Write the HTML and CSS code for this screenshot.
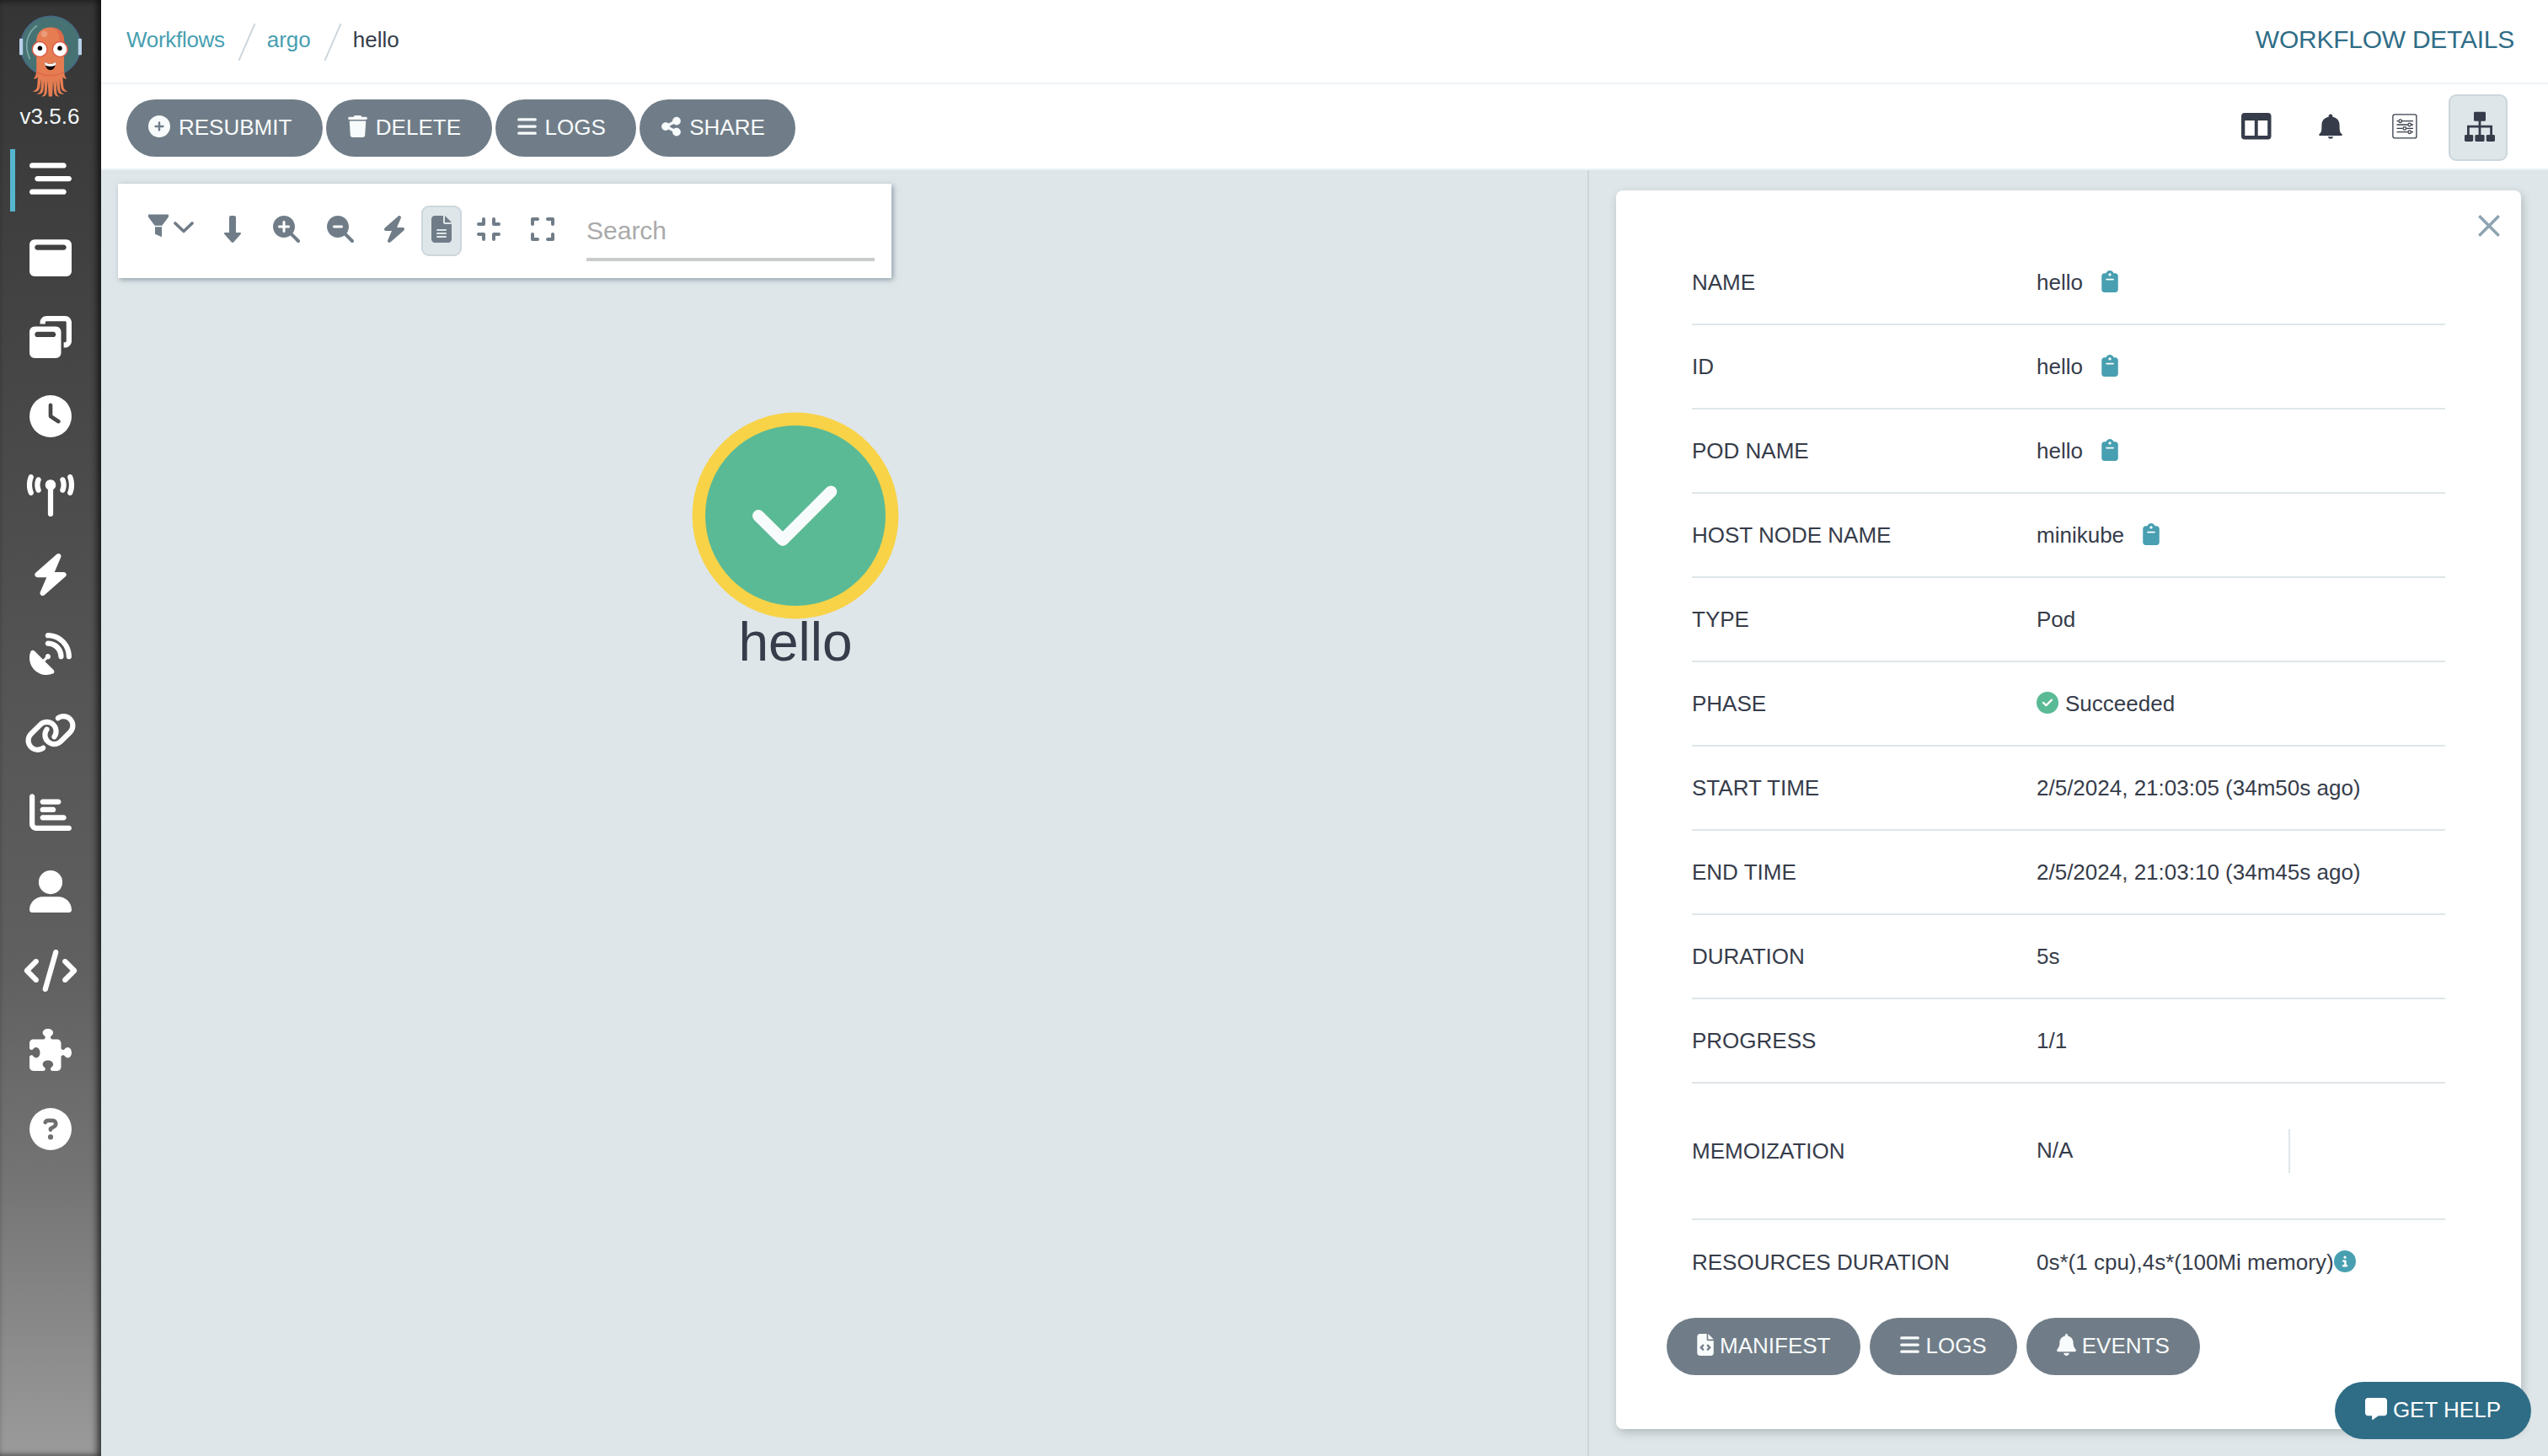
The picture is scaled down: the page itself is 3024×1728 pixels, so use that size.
FILE: index.html
```html
<!DOCTYPE html>
<html lang="en">
<head>
<meta charset="utf-8">
<title>Workflow Details - hello</title>
<link rel="stylesheet" href="styles.css">
</head>
<body>
<svg class="sprite" aria-hidden="true">
  <symbol id="i-workflows" viewBox="0 0 512 512"><path d="M0 96C0 78.3 14.3 64 32 64H416c17.7 0 32 14.3 32 32s-14.3 32-32 32H32C14.3 128 0 113.7 0 96zM64 256c0-17.7 14.3-32 32-32H480c17.7 0 32 14.3 32 32s-14.3 32-32 32H96c-17.7 0-32-14.3-32-32zM448 416c0 17.7-14.3 32-32 32H32c-17.7 0-32-14.3-32-32s14.3-32 32-32H416c17.7 0 32 14.3 32 32z"/></symbol>
  <symbol id="i-template" viewBox="0 0 512 512"><path d="M64 32C28.7 32 0 60.7 0 96V416c0 35.3 28.7 64 64 64H448c35.3 0 64-28.7 64-64V96c0-35.3-28.7-64-64-64H64zM96 96H416c17.7 0 32 14.3 32 32s-14.3 32-32 32H96c-17.7 0-32-14.3-32-32s14.3-32 32-32z"/></symbol>
  <symbol id="i-cluster" viewBox="0 0 512 512"><path d="M432 64H208c-8.8 0-16 7.2-16 16V96H128V80c0-44.2 35.8-80 80-80H432c44.2 0 80 35.8 80 80V304c0 44.2-35.8 80-80 80H416V320h16c8.8 0 16-7.2 16-16V80c0-8.8-7.2-16-16-16zM0 192c0-35.3 28.7-64 64-64H320c35.3 0 64 28.7 64 64V448c0 35.3-28.7 64-64 64H64c-35.3 0-64-28.7-64-64V192zm64 32c0 17.7 14.3 32 32 32H288c17.7 0 32-14.3 32-32s-14.3-32-32-32H96c-17.7 0-32 14.3-32 32z"/></symbol>
  <symbol id="i-clock" viewBox="0 0 512 512"><path d="M256 0a256 256 0 1 1 0 512A256 256 0 1 1 256 0zM232 120V256c0 8 4 15.5 10.7 20l96 64c11 7.4 25.9 4.4 33.3-6.7s4.4-25.9-6.7-33.3L280 243.2V120c0-13.3-10.7-24-24-24s-24 10.7-24 24z"/></symbol>
  <symbol id="i-tower" viewBox="0 0 576 512"><path d="M80.3 44C69.8 69.9 64 98.2 64 128s5.8 58.1 16.3 84c6.6 16.4-1.3 35-17.7 41.7s-35-1.3-41.7-17.7C7.4 202.6 0 166.1 0 128S7.4 53.4 20.9 20C27.6 3.6 46.2-4.3 62.6 2.3S86.9 27.6 80.3 44zM555.1 20C568.6 53.4 576 89.9 576 128s-7.4 74.6-20.9 108c-6.6 16.4-25.3 24.3-41.7 17.7S489.1 228.4 495.7 212c10.5-25.9 16.3-54.2 16.3-84s-5.8-58.1-16.3-84C489.1 27.6 497 9 513.4 2.3s35 1.3 41.7 17.7zM352 128c0 23.7-12.9 44.4-32 55.4V480c0 17.7-14.3 32-32 32s-32-14.3-32-32V183.4c-19.1-11.1-32-31.7-32-55.4c0-35.3 28.7-64 64-64s64 28.7 64 64zM170.6 76.8C163.8 92.4 160 109.7 160 128s3.8 35.6 10.6 51.2c7.1 16.2-.3 35.1-16.5 42.1s-35.1-.3-42.1-16.5c-10.3-23.6-16-49.6-16-76.8s5.7-53.2 16-76.8c7.1-16.2 25.9-23.6 42.1-16.5s23.6 25.9 16.5 42.1zM464 51.2c10.3 23.6 16 49.6 16 76.8s-5.7 53.2-16 76.8c-7.1 16.2-25.9 23.6-42.1 16.5s-23.6-25.9-16.5-42.1c6.8-15.6 10.6-32.9 10.6-51.2s-3.8-35.6-10.6-51.2c-7.1-16.2 .3-35.1 16.5-42.1s35.1 .3 42.1 16.5z"/></symbol>
  <symbol id="i-bolt" viewBox="0 0 448 512"><path d="M349.4 44.6c5.9-13.7 1.5-29.7-10.6-38.5s-28.6-8-39.9 1.8l-256 224c-10 8.8-13.6 22.9-8.9 35.3S50.7 288 64 288H175.5L98.6 467.4c-5.9 13.7-1.5 29.7 10.6 38.5s28.6 8 39.9-1.8l256-224c10-8.8 13.6-22.9 8.9-35.3s-16.6-20.7-30-20.7H272.5L349.4 44.6z"/></symbol>
  <symbol id="i-dish" viewBox="0 0 512 512"><path d="M192 32c0-17.7 14.3-32 32-32C383.1 0 512 128.9 512 288c0 17.7-14.3 32-32 32s-32-14.3-32-32C448 164.3 347.7 64 224 64c-17.7 0-32-14.3-32-32zM60.6 220.6L164.7 324.7l28.4-28.4c-.7-2.6-1.1-5.4-1.1-8.3c0-17.7 14.3-32 32-32s32 14.3 32 32s-14.3 32-32 32c-2.9 0-5.6-.4-8.3-1.1l-28.4 28.4L291.4 451.4c14.5 14.5 11.8 38.8-7.3 46.3C260.5 506.9 234.9 512 208 512C93.1 512 0 418.9 0 304c0-26.9 5.1-52.5 14.4-76.1c7.5-19 31.8-21.8 46.3-7.3zM224 96c106 0 192 86 192 192c0 17.7-14.3 32-32 32s-32-14.3-32-32c0-70.7-57.3-128-128-128c-17.7 0-32-14.3-32-32s14.3-32 32-32z"/></symbol>
  <symbol id="i-link" viewBox="0 0 640 512"><path d="M579.8 267.7c56.5-56.5 56.5-148 0-204.5c-50-50-128.8-56.5-186.3-15.4l-1.6 1.1c-14.4 10.3-17.7 30.3-7.4 44.6s30.3 17.7 44.6 7.4l1.6-1.1c32.1-22.9 76-19.3 103.8 8.6c31.5 31.5 31.5 82.5 0 114L422.3 334.8c-31.5 31.5-82.5 31.5-114 0c-27.9-27.9-31.5-71.8-8.6-103.8l1.1-1.6c10.3-14.4 6.9-34.4-7.4-44.6s-34.4-6.9-44.6 7.4l-1.1 1.6C206.5 251.2 213 330 263 380c56.5 56.5 148 56.5 204.5 0L579.8 267.7zM60.2 244.3c-56.5 56.5-56.5 148 0 204.5c50 50 128.8 56.5 186.3 15.4l1.6-1.1c14.4-10.3 17.7-30.3 7.4-44.6s-30.3-17.7-44.6-7.4l-1.6 1.1c-32.1 22.9-76 19.3-103.8-8.6C74 372 74 321 105.5 289.5L217.7 177.2c31.5-31.5 82.5-31.5 114 0c27.9 27.9 31.5 71.8 8.6 103.9l-1.1 1.6c-10.3 14.4-6.9 34.4 7.4 44.6s34.4 6.9 44.6-7.4l1.1-1.6C433.5 260.8 427 182 377 132c-56.5-56.5-148-56.5-204.5 0L60.2 244.3z"/></symbol>
  <symbol id="i-chart" viewBox="0 0 512 512"><path d="M32 32c17.7 0 32 14.3 32 32V400c0 8.800 7.200 16 16 16H480c17.700 0 32 14.300 32 32s-14.300 32-32 32H80c-44.200 0-80-35.800-80-80V64C0 46.300 14.300 32 32 32zm96 96c0-17.700 14.300-32 32-32l192 0c17.700 0 32 14.300 32 32s-14.300 32-32 32H160c-17.700 0-32-14.300-32-32zm32 64H288c17.700 0 32 14.300 32 32s-14.300 32-32 32H160c-17.700 0-32-14.300-32-32s14.300-32 32-32zm0 96H416c17.700 0 32 14.300 32 32s-14.300 32-32 32H160c-17.700 0-32-14.300-32-32s14.300-32 32-32z"/></symbol>
  <symbol id="i-user" viewBox="0 0 512 512"><path d="M256 288A144 144 0 1 0 256 0a144 144 0 1 0 0 288zm-94.7 32C72.2 320 0 392.2 0 481.3c0 17 13.8 30.7 30.7 30.7H481.3c17 0 30.7-13.8 30.7-30.7C512 392.2 439.8 320 350.7 320H161.3z"/></symbol>
  <symbol id="i-code" viewBox="0 0 640 512"><path d="M392.8 1.2c-17-4.9-34.7 5-39.6 22l-128 448c-4.9 17 5 34.7 22 39.6s34.7-5 39.6-22l128-448c4.9-17-5-34.7-22-39.6zm80.6 120.1c-12.5 12.5-12.5 32.8 0 45.3L562.7 256l-89.4 89.4c-12.5 12.5-12.5 32.8 0 45.3s32.8 12.5 45.3 0l112-112c12.5-12.5 12.5-32.8 0-45.3l-112-112c-12.5-12.5-32.8-12.5-45.3 0zm-306.7 0c-12.5-12.5-32.8-12.5-45.3 0l-112 112c-12.5 12.5-12.5 32.8 0 45.3l112 112c12.5 12.5 32.8 12.5 45.3 0s12.5-32.8 0-45.3L77.3 256l89.4-89.4c12.5-12.5 12.5-32.8 0-45.3z"/></symbol>
  <symbol id="i-puzzle" viewBox="0 0 512 512"><path d="M192 104.8c0-9.2-5.8-17.3-13.2-22.8C167.2 73.3 160 61.3 160 48c0-26.5 28.7-48 64-48s64 21.5 64 48c0 13.3-7.2 25.3-18.8 34c-7.4 5.5-13.2 13.6-13.2 22.8c0 12.8 10.4 23.2 23.2 23.2H336c26.5 0 48 21.5 48 48v56.8c0 12.8 10.4 23.2 23.2 23.2c9.2 0 17.3-5.8 22.8-13.2c8.7-11.6 20.7-18.8 34-18.8c26.5 0 48 28.7 48 64s-21.5 64-48 64c-13.3 0-25.3-7.2-34-18.8c-5.5-7.4-13.6-13.2-22.8-13.2c-12.8 0-23.2 10.4-23.2 23.2V464c0 26.5-21.5 48-48 48H279.2c-12.8 0-23.2-10.4-23.2-23.2c0-9.2 5.8-17.3 13.2-22.8c11.6-8.7 18.8-20.7 18.8-34c0-26.5-28.7-48-64-48s-64 21.5-64 48c0 13.3 7.2 25.3 18.8 34c7.4 5.5 13.2 13.6 13.2 22.8c0 12.8-10.4 23.2-23.2 23.2H48c-26.5 0-48-21.5-48-48V343.2C0 330.4 10.4 320 23.2 320c9.2 0 17.3 5.8 22.8 13.2C54.7 344.8 66.7 352 80 352c26.5 0 48-28.7 48-64s-21.5-64-48-64c-13.3 0-25.3 7.2-34 18.8C40.5 250.2 32.4 256 23.2 256C10.4 256 0 245.6 0 232.8V176c0-26.5 21.5-48 48-48H168.8c12.8 0 23.2-10.4 23.2-23.2z"/></symbol>
  <symbol id="i-question" viewBox="0 0 512 512"><path d="M256 512A256 256 0 1 0 256 0a256 256 0 1 0 0 512zM169.800 165.300c7.900-22.300 29.100-37.300 52.800-37.300h58.300c34.900 0 63.100 28.300 63.100 63.100c0 22.600-12.100 43.500-31.700 54.800L280 264.400c-.2 13-10.900 23.600-24 23.600c-13.300 0-24-10.700-24-24V250.500c0-8.600 4.600-16.500 12.100-20.800l44.300-25.400c4.700-2.700 7.600-7.700 7.600-13.100c0-8.400-6.800-15.100-15.100-15.100H222.600c-3.400 0-6.400 2.100-7.500 5.300l-.4 1.200c-4.400 12.500-18.200 19-30.600 14.600s-19-18.200-14.600-30.600l.4-1.200zM224 352a32 32 0 1 1 64 0 32 32 0 1 1 -64 0z"/></symbol>
  <symbol id="i-plus" viewBox="0 0 512 512"><path d="M256 512A256 256 0 1 0 256 0a256 256 0 1 0 0 512zM232 344V280H168c-13.300 0-24-10.700-24-24s10.700-24 24-24h64V168c0-13.300 10.700-24 24-24s24 10.700 24 24v64h64c13.300 0 24 10.700 24 24s-10.700 24-24 24H280v64c0 13.300-10.700 24-24 24s-24-10.700-24-24z"/></symbol>
  <symbol id="i-trash" viewBox="0 0 448 512"><path d="M135.2 17.7L128 32H32C14.3 32 0 46.3 0 64S14.3 96 32 96H416c17.7 0 32-14.3 32-32s-14.3-32-32-32H320l-7.2-14.3C307.4 6.8 296.3 0 284.2 0H163.8c-12.1 0-23.2 6.8-28.6 17.7zM416 128H32L53.2 467c1.6 25.3 22.6 45 47.9 45H346.9c25.3 0 46.3-19.7 47.9-45L416 128z"/></symbol>
  <symbol id="i-bars" viewBox="0 0 448 512"><path d="M32 64H416a32 32 0 0 1 0 64H32a32 32 0 0 1 0-64zM32 224H416a32 32 0 0 1 0 64H32a32 32 0 0 1 0-64zM32 384H416a32 32 0 0 1 0 64H32a32 32 0 0 1 0-64z"/></symbol>
  <symbol id="i-share" viewBox="0 0 448 512"><path d="M352 224c53 0 96-43 96-96s-43-96-96-96s-96 43-96 96c0 4 .2 8 .7 11.900l-94.100 47C145.400 170.200 121.900 160 96 160c-53 0-96 43-96 96s43 96 96 96c25.900 0 49.400-10.200 66.600-26.900l94.100 47c-.5 3.900-.7 7.800-.7 11.900c0 53 43 96 96 96s96-43 96-96s-43-96-96-96c-25.900 0-49.400 10.200-66.600 26.900l-94.100-47c.5-3.900 .7-7.800 .7-11.900s-.2-8-.7-11.900l94.100-47C302.600 213.800 326.100 224 352 224z"/></symbol>
  <symbol id="i-columns" viewBox="0 0 36 32"><path fill-rule="evenodd" d="M4 0H31.500a4 4 0 0 1 4 4V27.500a4 4 0 0 1-4 4H4a4 4 0 0 1-4-4V4a4 4 0 0 1 4-4zM4.300 9V27H15.800V9zM19.700 9V27H31.200V9z"/></symbol>
  <symbol id="i-bell-tool" viewBox="0 0 28 30"><path d="M14 .5c1.500 0 2.400 1 2.400 2.300v.9c5.200 1 8.200 4.500 8.200 10.200 0 6 .3 8.500 3 10.300v1.700H.4v-1.700c2.700-1.800 3-4.300 3-10.300C3.400 8.200 6.400 4.700 11.600 3.700v-.9C11.600 1.500 12.500 .5 14 .5zM10.800 27.300h6.400c-.3 1.500-1.600 2.400-3.200 2.400s-2.900-.9-3.200-2.400z"/></symbol>
  <symbol id="i-sliders" viewBox="0 0 30 30"><g fill="none" stroke="currentColor" stroke-width="1.300"><rect x=".9" y=".9" width="28" height="28" rx="2"/><path d="M5.500 8.700h2M12 8.700h13M5.500 13h13M23 13h2M5.500 17.400h7M17.200 17.400H25M5.500 21.700h13M23 21.700h2"/><circle cx="9.700" cy="8.700" r="1.800"/><circle cx="20.700" cy="13" r="1.800"/><circle cx="14.800" cy="17.400" r="1.800"/><circle cx="20.700" cy="21.700" r="1.800"/></g></symbol>
  <symbol id="i-sitemap" viewBox="0 0 36 36"><rect x="11" y=".8" width="14" height="11" rx="1.400"/><rect x="0" y="28" width="10.200" height="8" rx="1.400"/><rect x="12.400" y="28" width="11.200" height="8" rx="1.400"/><rect x="25.800" y="28" width="10.200" height="8" rx="1.400"/><path d="M16.600 11h2.800v5.800H33v11.500h-2.800v-8.800H19.400v8.800h-2.800v-8.800H5.800v8.800H3V16.800h13.600z"/></symbol>
  <symbol id="i-filter" viewBox="0 0 24 28"><path d="M0 .5H24V3.500L16.300 13.800H7.700L0 3.500zM8 15.300h8V27.200l-8-3.400z"/></symbol>
  <symbol id="i-chevron" viewBox="0 0 24 14"><path d="M2 2l10 9.500L22 2" fill="none" stroke="currentColor" stroke-width="3.700" stroke-linecap="round" stroke-linejoin="round"/></symbol>
  <symbol id="i-down" viewBox="0 0 20 32"><path d="M8 0h4a2 2 0 0 1 2 2V20h4.700c1.300 0 1.700 1.200 .9 2.100L11.400 31.200a2 2 0 0 1-2.800 0L.4 22.100C-.4 21.200 0 20 1.300 20H6V2a2 2 0 0 1 2-2z"/></symbol>
  <symbol id="i-zoomin" viewBox="0 0 512 512"><path d="M416 208c0 45.900-14.900 88.300-40 122.700L502.600 457.400c12.500 12.500 12.500 32.800 0 45.300s-32.800 12.500-45.300 0L330.700 376c-34.400 25.200-76.800 40-122.700 40C93.100 416 0 322.900 0 208S93.100 0 208 0S416 93.100 416 208zM184 296c0 13.300 10.700 24 24 24s24-10.700 24-24V232h64c13.300 0 24-10.700 24-24s-10.700-24-24-24H232V120c0-13.300-10.700-24-24-24s-24 10.700-24 24v64H120c-13.300 0-24 10.700-24 24s10.700 24 24 24h64v64z"/></symbol>
  <symbol id="i-zoomout" viewBox="0 0 512 512"><path d="M416 208c0 45.900-14.900 88.300-40 122.700L502.600 457.400c12.500 12.500 12.500 32.800 0 45.300s-32.800 12.500-45.300 0L330.700 376c-34.400 25.200-76.800 40-122.700 40C93.100 416 0 322.900 0 208S93.100 0 208 0S416 93.100 416 208zM136 184c-13.300 0-24 10.700-24 24s10.700 24 24 24H280c13.300 0 24-10.700 24-24s-10.700-24-24-24H136z"/></symbol>
  <symbol id="i-file" viewBox="0 0 384 512"><path d="M64 0C28.700 0 0 28.700 0 64V448c0 35.300 28.700 64 64 64H320c35.300 0 64-28.700 64-64V160H256c-17.700 0-32-14.300-32-32V0H64zM256 0V128H384L256 0zM112 256H272a16 16 0 0 1 0 32H112a16 16 0 0 1 0-32zm0 64H272a16 16 0 0 1 0 32H112a16 16 0 0 1 0-32zm0 64H272a16 16 0 0 1 0 32H112a16 16 0 0 1 0-32z"/></symbol>
  <symbol id="i-compress" viewBox="0 0 28 28"><path d="M2 8H8V2M20 2V8h6M2 20H8v6M20 26V20h6" fill="none" stroke="currentColor" stroke-width="4" stroke-linecap="round" stroke-linejoin="round"/></symbol>
  <symbol id="i-expand" viewBox="0 0 28 28"><path d="M2 8V2H8M20 2h6V8M2 20v6H8M20 26h6V20" fill="none" stroke="currentColor" stroke-width="4" stroke-linecap="round" stroke-linejoin="round"/></symbol>
  <symbol id="i-clip" viewBox="0 0 384 512"><path fill-rule="evenodd" d="M192 0c-41.800 0-77.400 26.700-90.500 64H64C28.700 64 0 92.700 0 128V448c0 35.300 28.700 64 64 64H320c35.300 0 64-28.700 64-64V128c0-35.300-28.700-64-64-64H282.500C269.400 26.700 233.800 0 192 0zm0 64a32 32 0 1 1 0 64 32 32 0 1 1 0-64zM112 192H272a16 16 0 0 1 0 32H112a16 16 0 0 1 0-32z"/></symbol>
  <symbol id="i-check" viewBox="0 0 512 512"><path d="M256 512A256 256 0 1 0 256 0a256 256 0 1 0 0 512zM369 209L241 337c-9.400 9.400-24.600 9.400-33.900 0l-64-64c-9.400-9.400-9.400-24.600 0-33.900s24.600-9.400 33.900 0l47 47L335 175c9.400-9.400 24.600-9.400 33.900 0s9.400 24.600 0 33.900z"/></symbol>
  <symbol id="i-info" viewBox="0 0 512 512"><path d="M256 512A256 256 0 1 0 256 0a256 256 0 1 0 0 512zM216 336h24V272H216c-13.300 0-24-10.700-24-24s10.700-24 24-24h48c13.300 0 24 10.700 24 24v88h8c13.300 0 24 10.700 24 24s-10.700 24-24 24H216c-13.300 0-24-10.700-24-24s10.700-24 24-24zm40-208a32 32 0 1 1 0 64 32 32 0 1 1 0-64z"/></symbol>
  <symbol id="i-filecode" viewBox="0 0 384 512"><path d="M64 0C28.700 0 0 28.700 0 64V448c0 35.300 28.700 64 64 64H320c35.300 0 64-28.700 64-64V160H256c-17.700 0-32-14.300-32-32V0H64zM256 0V128H384L256 0zM153 289l-31 31 31 31c9.400 9.400 9.400 24.600 0 33.900s-24.600 9.400-33.900 0L71 337c-9.400-9.400-9.400-24.600 0-33.900l48-48c9.400-9.400 24.600-9.400 33.900 0s9.400 24.600 0 33.900zM265 255l48 48c9.400 9.400 9.400 24.600 0 33.900l-48 48c-9.400 9.400-24.600 9.400-33.900 0s-9.400-24.600 0-33.900l31-31-31-31c-9.400-9.400-9.400-24.600 0-33.900s24.600-9.400 33.900 0z"/></symbol>
  <symbol id="i-bell" viewBox="0 0 448 512"><path d="M224 0c-17.700 0-32 14.300-32 32V51.200C119 66 64 130.600 64 208v18.800c0 47-17.300 92.400-48.500 127.600l-7.400 8.300c-8.400 9.400-10.400 22.900-5.300 34.400S19.400 416 32 416H416c12.600 0 24-7.400 29.200-18.900s3.100-25-5.300-34.400l-7.400-8.300C401.300 319.200 384 273.900 384 226.800V208c0-77.400-55-142-128-156.800V32c0-17.700-14.300-32-32-32zm45.300 493.300c12-12 18.700-28.300 18.700-45.300H160c0 17 6.700 33.300 18.700 45.300s28.300 18.700 45.300 18.700s33.300-6.700 45.300-18.700z"/></symbol>
  <symbol id="i-message" viewBox="0 0 512 512"><path d="M64 0C28.700 0 0 28.700 0 64V352c0 35.300 28.700 64 64 64h96v80c0 6.100 3.400 11.600 8.800 14.300s11.900 2.100 16.800-1.500L309.300 416H448c35.300 0 64-28.700 64-64V64c0-35.300-28.700-64-64-64H64z"/></symbol>
</svg>

<div class="layout">
  <aside class="sidebar">
    <svg class="logo" viewBox="0 0 74 98">
      <circle cx="37" cy="36.700" r="35.500" fill="#467273" stroke="#48698b" stroke-width="1.300"/>
      <rect x="0" y="27.700" width="4.200" height="19.600" rx=".8" fill="#b9d0ea"/>
      <rect x="69.800" y="27.700" width="4.200" height="19.600" rx=".8" fill="#b9d0ea"/>
      <path d="M20.500 12.700C10.500 20 4.500 34 12.200 51.700" fill="none" stroke="#7fa9a6" stroke-width="1.700" stroke-linecap="round"/>
      <path d="M20.200 31C20.200 20.500 27 14.500 36.800 14.500S53.200 20.500 53.200 31L53 62c0 6 .5 11 3.300 13.200-2 .8-3.800-.2-5-2l.9 10.500c.2 3.800 1.800 5.600 5.200 6.800-3.800 1.200-7-.2-8-4.500l-1.700-10.500 .5 11.500c.2 3.500 1.700 5.400 5 6.400-4.500 1-7.600-.8-8-5l-1.400-11.500 .3 12.500c.1 4 .9 5.600 3.400 6.800-4 .8-6-1-6.500-5.500L40 77.500l-1 18.800c-1.500 .5-2.900 .5-4.300 0L33.500 77.500l-.7 13.200c-.5 4.500-2.600 6.300-6.600 5.500 2.500-1.200 3.400-2.800 3.500-6.800l.3-12.500-1.500 11.500c-.5 4.200-3.500 6-8 5 3.300-1 4.800-2.900 5-6.400L26 75.500 24.200 86c-1 4.300-4.200 5.700-8.500 4.500 3.600-1.200 5.200-3 5.500-6.800l.8-10.500c-1.200 1.800-3 2.800-5.200 2C19.700 73 20.300 68 20.300 62z" fill="#e67d52"/>
      <path d="M38 14.500c9 0 15.200 6 15.200 16.500v2L48 32c0-10-3-15.500-10-17.500z" fill="#dd6a4b"/>
      <path d="M20.300 67.500c10 5.500 23 5.500 32.800 0" fill="none" stroke="#df6c4b" stroke-width="2"/>
      <circle cx="29.500" cy="22.300" r="3.800" fill="#eb9a7c"/>
      <circle cx="24.200" cy="40.500" r="8.900" fill="#fff" stroke="#df5b45" stroke-width="1.500"/>
      <circle cx="48.200" cy="40.500" r="8.900" fill="#fff" stroke="#df5b45" stroke-width="1.500"/>
      <circle cx="24.400" cy="39.300" r="2.700" fill="#000"/>
      <circle cx="48" cy="39.300" r="2.700" fill="#000"/>
      <path d="M30 55.500c4 3.200 9.500 3.200 13.500 0-.4 5.500-3 9.800-6.700 9.800S30.400 61 30 55.500z" fill="#160a08"/>
      <path d="M30 55.500c4 3.200 9.500 3.200 13.500 0-.1 1.600-.4 2.800-.8 3.900-3.900 1.800-8 1.800-12 0-.4-1.100-.6-2.300-.7-3.900z" fill="#fff"/>
    </svg>
    <div class="version">v3.5.6</div>
    <nav class="nav">
      <a class="nav-item active"><svg><use href="#i-workflows"/></svg></a>
      <a class="nav-item"><svg><use href="#i-template"/></svg></a>
      <a class="nav-item"><svg><use href="#i-cluster"/></svg></a>
      <a class="nav-item"><svg><use href="#i-clock"/></svg></a>
      <a class="nav-item"><svg><use href="#i-tower"/></svg></a>
      <a class="nav-item"><svg><use href="#i-bolt"/></svg></a>
      <a class="nav-item"><svg><use href="#i-dish"/></svg></a>
      <a class="nav-item"><svg><use href="#i-link"/></svg></a>
      <a class="nav-item"><svg><use href="#i-chart"/></svg></a>
      <a class="nav-item"><svg><use href="#i-user"/></svg></a>
      <a class="nav-item"><svg><use href="#i-code"/></svg></a>
      <a class="nav-item"><svg><use href="#i-puzzle"/></svg></a>
      <a class="nav-item"><svg><use href="#i-question"/></svg></a>
    </nav>
  </aside>

  <div class="page">
    <header class="topbar">
      <div class="crumbs">
        <a class="crumb crumb-root">Workflows</a>
        <svg class="slash" viewBox="0 0 20 44"><path d="M19.200 .8L.8 43.200"/></svg>
        <a class="crumb">argo</a>
        <svg class="slash" viewBox="0 0 20 44"><path d="M19.200 .8L.8 43.200"/></svg>
        <span class="crumb current">hello</span>
      </div>
      <div class="title">WORKFLOW DETAILS</div>
    </header>

    <div class="actions">
      <div class="buttons">
        <button class="btn"><svg class="w26"><use href="#i-plus"/></svg><span>RESUBMIT</span></button>
        <button class="btn"><svg class="w23"><use href="#i-trash"/></svg><span>DELETE</span></button>
        <button class="btn"><svg class="w23"><use href="#i-bars"/></svg><span>LOGS</span></button>
        <button class="btn"><svg class="w23"><use href="#i-share"/></svg><span>SHARE</span></button>
      </div>
      <div class="views">
        <a class="view"><svg class="v-columns"><use href="#i-columns"/></svg></a>
        <a class="view"><svg class="v-bell"><use href="#i-bell-tool"/></svg></a>
        <a class="view"><svg class="v-sliders"><use href="#i-sliders"/></svg></a>
        <a class="view on"><svg class="v-sitemap"><use href="#i-sitemap"/></svg></a>
      </div>
    </div>

    <div class="content">
      <section class="graph">
        <div class="toolbar">
          <a class="filter"><svg class="t-filter"><use href="#i-filter"/></svg><svg class="t-chevron"><use href="#i-chevron"/></svg></a>
          <a class="tool t-down"><svg><use href="#i-down"/></svg></a>
          <a class="tool"><svg><use href="#i-zoomin"/></svg></a>
          <a class="tool"><svg><use href="#i-zoomout"/></svg></a>
          <a class="tool t-bolt"><svg><use href="#i-bolt"/></svg></a>
          <a class="tool on"><svg><use href="#i-file"/></svg></a>
          <a class="tool small"><svg><use href="#i-compress"/></svg></a>
          <a class="tool small"><svg><use href="#i-expand"/></svg></a>
          <div class="search">Search</div>
        </div>
        <div class="node">
          <svg class="node-icon" viewBox="0 0 246 246">
            <circle cx="123" cy="123" r="114.700" fill="#5aba96" stroke="#f8d347" stroke-width="15.400"/>
            <path d="M79.200 123.200L108 151.800L165.200 94.500" fill="none" stroke="#f8fbfb" stroke-width="14.200" stroke-linecap="round" stroke-linejoin="round"/>
          </svg>
          <div class="node-label">hello</div>
        </div>
      </section>

      <section class="side">
        <div class="card">
          <svg class="close" viewBox="0 0 26 26"><path d="M1.300 1.300L24.700 24.700M24.700 1.300L1.300 24.700"/></svg>
          <div class="rows">
            <div class="row"><div class="label">NAME</div><div class="value">hello<svg class="clip"><use href="#i-clip"/></svg></div></div>
            <div class="row"><div class="label">ID</div><div class="value">hello<svg class="clip"><use href="#i-clip"/></svg></div></div>
            <div class="row"><div class="label">POD NAME</div><div class="value">hello<svg class="clip"><use href="#i-clip"/></svg></div></div>
            <div class="row"><div class="label">HOST NODE NAME</div><div class="value">minikube<svg class="clip"><use href="#i-clip"/></svg></div></div>
            <div class="row"><div class="label">TYPE</div><div class="value">Pod</div></div>
            <div class="row"><div class="label">PHASE</div><div class="value"><svg class="ok"><use href="#i-check"/></svg>Succeeded</div></div>
            <div class="row"><div class="label">START TIME</div><div class="value">2/5/2024, 21:03:05 (34m50s ago)</div></div>
            <div class="row"><div class="label">END TIME</div><div class="value">2/5/2024, 21:03:10 (34m45s ago)</div></div>
            <div class="row"><div class="label">DURATION</div><div class="value">5s</div></div>
            <div class="row"><div class="label">PROGRESS</div><div class="value">1/1</div></div>
            <div class="row memo"><div class="label">MEMOIZATION</div><div class="value"><span class="memo-value">N/A</span></div></div>
            <div class="row last"><div class="label">RESOURCES DURATION</div><div class="value">0s*(1 cpu),4s*(100Mi memory)<svg class="info"><use href="#i-info"/></svg></div></div>
          </div>
          <div class="card-buttons">
            <button class="btn tight"><svg class="w20"><use href="#i-filecode"/></svg><span>MANIFEST</span></button>
            <button class="btn tight"><svg class="w23"><use href="#i-bars"/></svg><span>LOGS</span></button>
            <button class="btn tight"><svg class="w23"><use href="#i-bell"/></svg><span>EVENTS</span></button>
          </div>
        </div>
      </section>
    </div>
  </div>
</div>
<button class="btn tight help"><svg class="w26"><use href="#i-message"/></svg><span>GET HELP</span></button>
</body>
</html>
```

FILE: styles.css
```css
* { box-sizing: border-box; }

body {
  margin: 0;
  width: 3024px;
  height: 1728px;
  overflow: hidden;
  font-family: "Liberation Sans", Arial, sans-serif;
  font-size: 26px;
  line-height: 36px;
  color: #363c4a;
  background: #dee6e9;
}

svg { display: block; flex: none; fill: currentColor; }
.sprite { position: absolute; width: 0; height: 0; }

.layout { display: flex; height: 1728px; }

/* Sidebar */
.sidebar {
  width: 120px;
  flex: none;
  display: flex;
  flex-direction: column;
  align-items: center;
  padding-top: 18px;
  color: #fff;
  background: linear-gradient(to bottom, #353535 0, #424242 340px, #565656 850px, #606060 1150px, #747474 1400px, #9b9b9b 100%);
  box-shadow: inset -4px 0 8px rgba(0, 0, 0, .7);
}
.logo { width: 74px; height: 98px; }
.version { height: 36px; margin: 4px 2px 0 0; color: #f2f6f8; }
.nav { width: 120px; margin-top: 9px; }
.nav-item {
  display: flex;
  align-items: center;
  justify-content: center;
  height: 94px;
}
.nav-item svg { width: 64px; height: 50px; }
.nav-item.active {
  background: linear-gradient(#55b6cf, #55b6cf) no-repeat 12px 12px / 6px 74px;
}

/* Header */
.page { flex: 1; display: flex; flex-direction: column; min-width: 0; }
.topbar {
  height: 100px;
  display: flex;
  align-items: center;
  justify-content: space-between;
  padding: 0 40px 0 30px;
  background: #fff;
  border-bottom: 2px solid #edf2f5;
}
.crumbs { display: flex; align-items: center; }
.crumb { color: #489fb1; padding-bottom: 5px; }
.crumb.current { color: #363c4a; }
.crumb-root { letter-spacing: -.3px; }
.slash { width: 20px; height: 44px; margin: 2px 14px 0 16px; fill: none; stroke: #ccd6dd; stroke-width: 2; stroke-linecap: round; }
.title { font-size: 30px; letter-spacing: -.25px; color: #2f6d87; padding-bottom: 4px; }

.actions {
  height: 102px;
  display: flex;
  justify-content: space-between;
  padding: 12px 48px 0 30px;
  background: #fff;
  border-bottom: 2px solid #edf2f5;
}
.buttons { display: flex; gap: 4px; padding-top: 6px; }
.btn {
  display: flex;
  align-items: center;
  height: 68px;
  margin: 0;
  padding: 0 36.500px 4px 26px;
  gap: 10px;
  border: 0;
  border-radius: 34px;
  background: #707d88;
  color: #f8fbfb;
  font: inherit;
}
.btn svg { height: 26px; }
.btn span { padding-top: 2px; }
.btn.tight { padding: 0 36px 4px; gap: 7px; }
.w20 { width: 20px; }
.w23 { width: 23px; }
.w26 { width: 26px; }

.views { display: flex; gap: 18px; }
.view {
  width: 70px;
  height: 79px;
  display: flex;
  align-items: center;
  justify-content: center;
  padding-bottom: 3px;
  border: 2px solid transparent;
  border-radius: 9px;
  color: #363c4a;
}
.view.on { border-color: #ccd6dd; background: #dee6e9; margin-left: -1px; }
.v-columns { width: 36px; height: 32px; }
.v-bell { width: 28px; height: 30px; }
.v-sliders { width: 30px; height: 30px; }
.v-sitemap { width: 36px; height: 36px; margin-left: 4px; }

/* Graph */
.content { flex: 1; display: flex; min-height: 0; }
.graph {
  width: 1766px;
  flex: none;
  border-right: 2px solid #ccd5d9;
  padding: 16px 0 0 20px;
}
.toolbar {
  width: 918px;
  height: 112px;
  display: flex;
  padding: 26px 0 0 36px;
  background: #fff;
  color: #707d88;
  box-shadow: 2px 2px 6px rgba(109, 127, 139, .7);
}
.filter { display: flex; gap: 6px; width: 78px; }
.t-filter { width: 24px; height: 28px; margin-top: 10px; }
.t-chevron { width: 24px; height: 14px; margin-top: 19px; }
.tool {
  width: 48px;
  height: 60px;
  margin-right: 16px;
  display: flex;
  justify-content: center;
  padding-top: 10px;
  border: 2px solid transparent;
  border-radius: 9px;
}
.tool svg { width: 32px; height: 32px; }
.tool.t-down { width: 44px; margin-right: 18px; }
.tool.t-bolt { margin-right: 8px; }
.tool.on { border-color: #ccd6dd; background: #dee6e9; margin-right: 8px; }
.tool.small svg { width: 28px; height: 28px; margin-top: 2px; }
.tool.small + .small { margin-right: 28px; }
.search {
  width: 342px;
  height: 66px;
  padding: 12px 0 0;
  font-size: 30px;
  color: #aaa;
  border-bottom: 4px solid #cacbcd;
}
.node {
  display: flex;
  flex-direction: column;
  align-items: center;
  width: 246px;
  margin: 159px 0 0 681px;
}
.node-icon { width: 246px; height: 246px; }
.node-label { font-size: 64px; line-height: 72px; margin-top: -9px; }

/* Details */
.side { flex: 1; padding: 24px 32px 32px; }
.card {
  height: 1470px;
  padding: 29px 25px 0 60px;
  border-radius: 8px;
  background: #fff;
  box-shadow: 2px 4px 12px rgba(0, 0, 0, .2);
}
.close { width: 26px; height: 26px; margin-left: auto; fill: none; stroke: #8fa4b1; stroke-width: 3.600; }
.rows { width: 894px; margin: 5px 0 0 30px; }
.row {
  height: 100px;
  display: flex;
  align-items: center;
  border-bottom: 2px solid #dee6e9;
}
.label { width: 409px; }
.value { display: flex; align-items: center; flex: 1; }
.value svg { height: 26px; margin-bottom: 3px; }
.clip { width: 20px; margin-left: 22px; color: #489fb1; }
.ok { width: 26px; margin-right: 8px; color: #5aba96; }
.info { width: 26px; color: #489fb1; }
.row.memo { height: 162px; }
.memo-value {
  width: 301px;
  height: 52px;
  line-height: 50px;
  border-right: 2px solid #dee6e9;
}
.row.last { border-bottom: 0; }
.card-buttons { display: flex; gap: 11px; margin-top: 16px; }

.help {
  position: absolute;
  right: 20px;
  bottom: 20px;
  background: #2f6d87;
  color: #fff;
}
```
